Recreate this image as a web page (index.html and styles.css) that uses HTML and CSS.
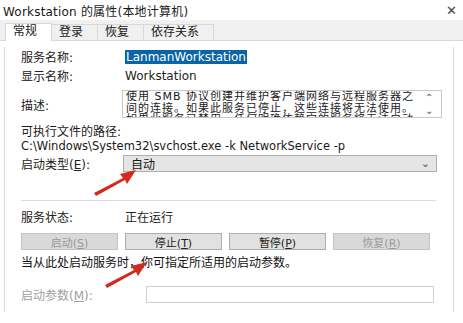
FILE: index.html
```html
<!DOCTYPE html>
<html lang="zh-CN">
<head>
<meta charset="UTF-8">
<title>Workstation 的属性(本地计算机)</title>
<link rel="stylesheet" href="styles.css">
</head>
<body>
  <div id="dialog">
    <div class="titlebar">
      <span class="title">Workstation 的属性(本地计算机)</span>
      <span class="close">✕</span>
    </div>
    <div class="tabs">
      <span class="tab active">常规</span>
      <span class="tab">登录</span>
      <span class="tab">恢复</span>
      <span class="tab">依存关系</span>
    </div>
    <div class="panel">
      <div class="row first">
        <span class="label">服务名称:</span>
        <span class="value"><span class="selected">LanmanWorkstation</span></span>
      </div>
      <div class="row">
        <span class="label">显示名称:</span>
        <span class="value">Workstation</span>
      </div>
      <div class="row desc-row">
        <span class="label">描述:</span>
        <div class="desc">
          <div class="desc-text">
            <div>使用 SMB 协议创建并维护客户端网络与远程服务器之</div>
            <div>间的连接。如果此服务已停止，这些连接将无法使用。</div>
            <div>如果此服务已禁用，任何明确依赖它的服务将无法启动</div>
          </div>
          <div class="desc-scroll"><span>&#8963;</span><span>&#8964;</span></div>
        </div>
      </div>
      <div class="path-label">可执行文件的路径:</div>
      <div class="path">C:\Windows\System32\svchost.exe -k NetworkService -p</div>
      <div class="row type-row">
        <span class="label">启动类型(<u>E</u>):</span>
        <div class="select">自动<span class="chev">&#8964;</span></div>
      </div>
      <div class="sep"></div>
      <div class="row status-row">
        <span class="label">服务状态:</span>
        <span class="value">正在运行</span>
      </div>
      <div class="buttons">
        <button class="btn" disabled>启动(<u>S</u>)</button>
        <button class="btn">停止(<u>T</u>)</button>
        <button class="btn">暂停(<u>P</u>)</button>
        <button class="btn" disabled>恢复(<u>R</u>)</button>
      </div>
      <div class="hint">当从此处启动服务时，你可指定所适用的启动参数。</div>
      <div class="row param-row">
        <span class="label dim">启动参数(<u>M</u>):</span>
        <div class="param"></div>
      </div>
    </div>

    <svg class="arrow arrow-one" width="60" height="40" viewBox="0 0 60 40">
      <polygon points="2,30 31,15 28,11 44,7 35,21 33,17 4,33" fill="#d42a1e"/>
    </svg>
    <svg class="arrow arrow-two" width="60" height="40" viewBox="0 0 60 40">
      <polygon points="2,30 31,15 28,11 44,7 35,21 33,17 4,33" fill="#d42a1e"/>
    </svg>
  </div>
</body>
</html>
```
FILE: styles.css
```css
body {
  margin: 0;
  background: #fff;
  font-family: "DejaVu Sans", "Noto Sans CJK SC", sans-serif;
  font-size: 12px;
  color: #1a1a1a;
}
#dialog {
  position: relative;
  width: 463px;
  height: 323px;
  overflow: hidden;
}
.titlebar {
  display: flex;
  justify-content: space-between;
  align-items: center;
  height: 20px;
  padding: 0 6px 0 3px;
}
.title {
  font-size: 12px;
  letter-spacing: 0.2px;
}
.close {
  font-size: 13px;
  color: #444;
}
.tabs {
  display: flex;
  align-items: flex-end;
  height: 20px;
  background: #f0f0f0;
  padding-left: 5px;
  border-bottom: 1px solid #d9d9d9;
}
.tab {
  height: 15px;
  line-height: 15px;
  padding: 0 14px 0 7px;
  border: 1px solid #d9d9d9;
  border-bottom: none;
  margin-right: -1px;
  background: #f0f0f0;
  font-size: 12px;
}
.tab.active {
  background: #fff;
  height: 17px;
  margin-bottom: -1px;
  line-height: 15px;
}
.panel {
  margin: 0 9px 0 4px;
  padding: 0 0 0 16px;
  border-left: 1px solid #d9d9d9;
  border-right: 1px solid #d9d9d9;
  height: 265px;
}
.row {
  display: flex;
  align-items: center;
  height: 19px;
}
.row.first {
  margin-top: 6px;
}
.label {
  width: 104px;
  flex: none;
  color: #222;
}
.value {
  color: #222;
}
.selected {
  background: #0a64a8;
  color: #fff;
  padding: 0 1px;
}
.desc-row {
  height: 28px;
  margin-top: 5px;
}
.desc {
  display: flex;
  width: 318px;
  height: 26px;
  border: 1px solid #c8c8c8;
  overflow: hidden;
  margin-left: -3px;
}
.desc-text {
  flex: 1;
  padding: 0 3px;
  font-size: 11px;
  letter-spacing: 1px;
  line-height: 11.5px;
  white-space: nowrap;
  overflow: hidden;
}
.desc-scroll {
  display: flex;
  flex-direction: column;
  justify-content: space-around;
  width: 16px;
  font-size: 10px;
  line-height: 10px;
  color: #555;
}
.path-label {
  margin-top: 7px;
  line-height: 14px;
}
.path {
  line-height: 15px;
  font-size: 11.5px;
}
.type-row {
  height: 17px;
  margin-top: 1px;
}
.select {
  display: flex;
  justify-content: space-between;
  align-items: center;
  width: 299px;
  height: 15px;
  margin-left: -2px;
  padding: 0 6px 0 7px;
  background: #e5e5e5;
  border: 1px solid #adadad;
}
.chev {
  font-size: 11px;
  color: #555;
  line-height: 8px;
}
.sep {
  height: 1px;
  width: 415px;
  background: #dcdcdc;
  margin-top: 28px;
}
.status-row {
  margin-top: 6px;
}
.buttons {
  display: flex;
  gap: 7px;
  margin-top: 7px;
}
.btn {
  width: 97px;
  height: 17px;
  padding: 0;
  font-family: inherit;
  font-size: 11px;
  color: #222;
  background: #e1e1e1;
  border: 1px solid #adadad;
}
.btn:disabled {
  color: #9a9a9a;
  background: #d9d9d9;
  border-color: #c4c4c4;
}
.hint {
  margin-top: 6px;
  line-height: 14px;
  color: #111;
}
.param-row {
  height: 17px;
  margin-top: 16px;
}
.param-row .label {
  width: 125px;
}
.dim {
  color: #a0a0a0;
}
.param {
  width: 286px;
  height: 15px;
  border: 1px solid #d0d0d0;
}
.arrow {
  position: absolute;
}
.arrow-one {
  left: 92px;
  top: 163px;
}
.arrow-two {
  left: 103px;
  top: 255px;
}
```
